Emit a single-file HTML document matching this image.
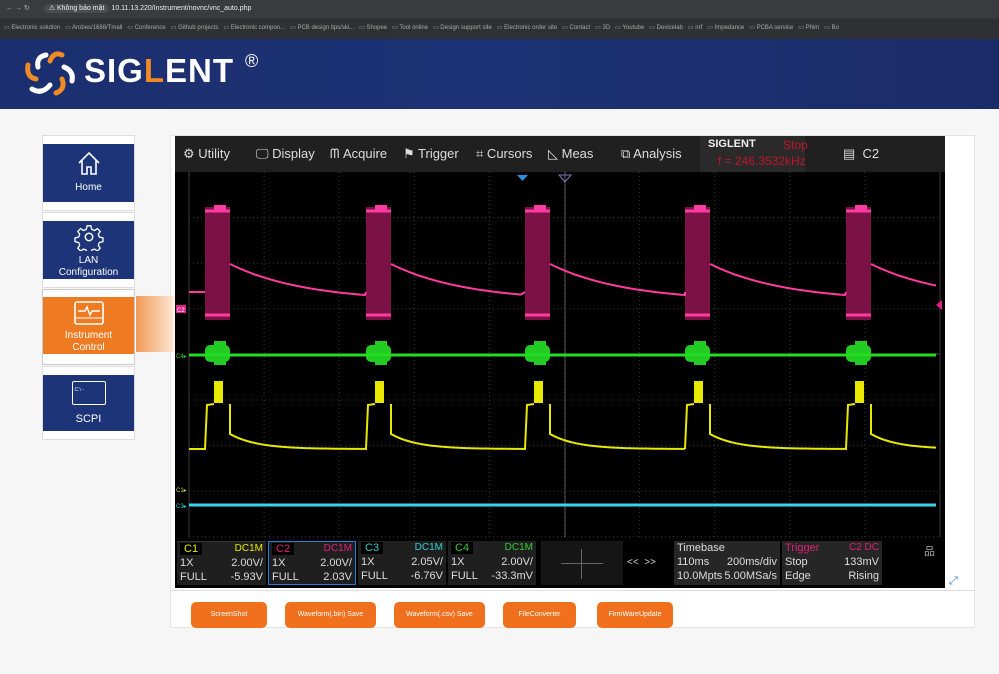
<!DOCTYPE html>
<html><head><meta charset="utf-8"><style>
*{margin:0;padding:0;box-sizing:border-box}
body{width:999px;height:674px;overflow:hidden;background:#f4f4f4;font-family:"Liberation Sans",sans-serif;position:relative}
.abs{position:absolute}
#top{left:0;top:0;width:999px;height:18px;background:#3a3b3e;color:#ddd;font-size:7px;line-height:18px}
#bm{left:0;top:18px;width:999px;height:21px;background:#2f3033;color:#aaa;font-size:6px;line-height:21px;white-space:nowrap;overflow:hidden}
#hdr{left:0;top:39px;width:999px;height:70px;background:linear-gradient(90deg,#1b2f70,#1d3274 50%,#1a2c68)}
.nav{left:42px;width:93px;background:#fff;border:1px solid #ddd}
.tile{position:absolute;left:0;right:0;color:#fff;font-size:10px;text-align:center;line-height:12px}
.menu{left:175px;top:136px;width:770px;height:36px;background:#202020;color:#ddd;font-size:13px}
.menu span{position:absolute;top:10px}
.btn{position:absolute;top:602px;height:26px;background:#f0701d;color:#fff;font-size:7px;border-radius:5px;text-align:center;line-height:26px}
.cb{position:absolute;top:541px;height:44px;background:#1f1f1f;font-size:11px;color:#ddd}
.cb div{position:absolute;left:3px;right:3px;display:flex;justify-content:space-between}
</style></head><body>
<div id="top" class="abs"><span style="margin-left:6px;color:#bbb">←  →  ↻</span><span style="margin-left:14px;background:#4a4b4e;border-radius:8px;padding:1px 5px;color:#eee">⚠ Không bảo mật</span> <span style="color:#eee">10.11.13.220/Instrument/novnc/vnc_auto.php</span></div>
<div id="bm" class="abs"><span style="margin-left:4px">▭ Electronic solution &nbsp; ▭ Arobes/1688/Tmall &nbsp; ▭ Conference &nbsp; ▭ Github projects &nbsp; ▭ Electronic compon... &nbsp; ▭ PCB design tips/ski... &nbsp; ▭ Shopee &nbsp; ▭ Tool online &nbsp; ▭ Design support site &nbsp; ▭ Electronic order site &nbsp; ▭ Contact &nbsp; ▭ 3D &nbsp; ▭ Youtube &nbsp; ▭ Devicelab &nbsp; ▭ nrf &nbsp; ▭ Impedance &nbsp; ▭ PCBA service &nbsp; ▭ Phim &nbsp; ▭ Bo</span></div>
<div id="hdr" class="abs">
<svg class="abs" style="left:22px;top:10px" width="56" height="50" viewBox="0 0 56 50"><g fill="none" stroke-width="5" stroke-linecap="round"><path d="M24 6 Q14 8 16 18" stroke="#fff"/><path d="M6 16 Q4 28 14 30" stroke="#f08a24"/><path d="M10 40 Q20 46 28 36" stroke="#fff"/><path d="M34 44 Q44 40 40 30" stroke="#f08a24"/><path d="M50 32 Q52 22 42 18" stroke="#fff"/><path d="M40 6 Q32 2 28 12" stroke="#f08a24"/></g></svg>
<div class="abs" style="left:84px;top:13px;color:#fff;font-size:33px;font-weight:bold;letter-spacing:1px">SIG<span style="color:#f08a24">L</span>ENT</div>
<div class="abs" style="left:245px;top:12px;color:#fff;font-size:18px">®</div>
</div>
<div class="abs" style="left:0;top:109px;width:999px;height:565px;background:#f6f6f6"></div>
<div class="abs" style="left:170px;top:135px;width:805px;height:493px;background:#fff;border:1px solid #e4e4e4"></div>
<!-- nav -->
<div class="abs nav" style="top:135px;height:76px"><div class="tile" style="top:8px;height:58px;background:#1d3478"><svg width="30" height="30" viewBox="0 0 30 30" style="margin-top:4px"><path d="M5 15 L15 5 L25 15 M8 12 V26 H13 V19 H17 V26 H22 V12" fill="none" stroke="#fff" stroke-width="1.6"/></svg><br>Home</div></div>
<div class="abs nav" style="top:212px;height:76px"><div class="tile" style="top:8px;height:58px;background:#1d3478"><svg width="30" height="28" viewBox="0 0 30 30" style="margin-top:2px"><circle cx="15" cy="15" r="4" fill="none" stroke="#fff" stroke-width="1.6"/><path d="M13 3h4l1 4 3 1 3-2 3 3-2 3 1 3 4 1v4l-4 1-1 3 2 3-3 3-3-2-3 1-1 4h-4l-1-4-3-1-3 2-3-3 2-3-1-3-4-1v-4l4-1 1-3-2-3 3-3 3 2 3-1z" fill="none" stroke="#fff" stroke-width="1.4"/></svg><br>LAN<br>Configuration</div></div>
<div class="abs" style="left:136px;top:296px;width:40px;height:56px;background:linear-gradient(90deg,#f19a55,#fbe3cf 90%,#fff0)"></div>
<div class="abs nav" style="top:289px;height:76px;border-color:#ccc"><div class="tile" style="top:7px;height:57px;background:#ee7a22"><svg width="32" height="26" viewBox="0 0 32 26" style="margin-top:3px"><rect x="2" y="2" width="28" height="22" rx="2" fill="none" stroke="#fff" stroke-width="1.6"/><path d="M5 11h7l2-4 3 8 2-4h8" fill="none" stroke="#fff" stroke-width="1.4"/><path d="M2 18h28" stroke="#fff"/></svg><br>Instrument<br>Control</div></div>
<div class="abs nav" style="top:366px;height:74px"><div class="tile" style="top:8px;height:56px;background:#1d3478"><div style="margin:6px auto 0;width:34px;height:24px;border:1.5px solid #fff;border-radius:2px;font-size:5px;text-align:left;padding:2px">C:\ -</div><div style="margin-top:8px;font-size:11px">SCPI</div></div></div>
<!-- scope -->
<div class="abs" style="left:175px;top:136px;width:770px;height:452px;background:#000"></div>
<div class="abs menu"><span style="left:8px">⚙ Utility</span><span style="left:81px">🖵 Display</span><span style="left:155px">ᗰ Acquire</span><span style="left:228px">⚑ Trigger</span><span style="left:301px">⌗ Cursors</span><span style="left:373px">◺ Meas</span><span style="left:446px">⧉ Analysis</span>
<div class="abs" style="left:525px;top:0;width:105px;height:36px;background:#2a2a2a"></div>
<span style="left:533px;top:2px;font-size:11px;font-weight:bold;color:#eee">SIGLENT</span><span style="left:608px;top:2px;font-size:12px;color:#c0142a">Stop</span><span style="left:543px;top:18px;font-size:12px;color:#c0142a">f = 246.3532kHz</span><span style="left:668px">▤ &nbsp;C2</span></div>
<svg class="abs" style="left:175px;top:172px" width="770" height="368" viewBox="175 172 770 368" id="plot">
<g stroke="#3a3a3a" stroke-width="1" id="grid"></g>
<path d="M517 175 h11 l-5.5 6z" fill="#2a8fe0"/><path d="M559 175 h12 l-6 7z" fill="none" stroke="#7b7bbb"/>
<g id="w"></g>
<rect x="176" y="305" width="10" height="8" fill="#e0208a"/><text x="177" y="312" font-size="6" fill="#fff">C2</text>
<text x="176" y="358" font-size="6" fill="#3c3">C4▸</text><text x="176" y="492" font-size="6" fill="#cc3">C1▸</text><text x="176" y="508" font-size="6" fill="#3cc">C3▸</text>
<path d="M942 300 l-6 5 6 5z" fill="#e0208a"/>
</svg>
<!-- bottom -->
<div class="cb" style="left:177px;width:89px;border-top:1px solid #333"><div style="top:1px"><span style="background:#000;color:#e8e800;padding:0 4px">C1</span><span style="color:#e8e800;font-size:10px">DC1M</span></div><div style="top:15px"><span>1X</span><span>2.00V/</span></div><div style="top:29px"><span>FULL</span><span>-5.93V</span></div></div>
<div class="cb" style="left:268px;width:88px;border:1.5px solid #2a7ad8"><div style="top:1px"><span style="color:#e0207a;background:#000;padding:0 4px">C2</span><span style="color:#e0207a;font-size:10px">DC1M</span></div><div style="top:15px"><span>1X</span><span>2.00V/</span></div><div style="top:29px"><span>FULL</span><span>2.03V</span></div></div>
<div class="cb" style="left:358px;width:88px"><div style="top:1px"><span style="color:#3cc;background:#000;padding:0 4px">C3</span><span style="color:#3cc;font-size:10px">DC1M</span></div><div style="top:15px"><span>1X</span><span>2.05V/</span></div><div style="top:29px"><span>FULL</span><span>-6.76V</span></div></div>
<div class="cb" style="left:448px;width:88px"><div style="top:1px"><span style="color:#3c3;background:#000;padding:0 4px">C4</span><span style="color:#3c3;font-size:10px">DC1M</span></div><div style="top:15px"><span>1X</span><span>2.00V/</span></div><div style="top:29px"><span>FULL</span><span>-33.3mV</span></div></div>
<div class="cb" style="left:541px;width:82px;background:#151515"><div style="top:22px;left:20px;right:20px;height:1px;background:#666"></div><div style="top:8px;left:40px;width:1px;height:30px;background:#666;right:auto"></div></div>
<div class="abs" style="left:627px;top:557px;color:#ccc;font-size:10px">&lt;&lt; &nbsp;&gt;&gt;</div>
<div class="cb" style="left:674px;width:106px;background:#262626"><div style="top:1px"><span>Timebase</span></div><div style="top:15px"><span>110ms</span><span>200ms/div</span></div><div style="top:29px"><span>10.0Mpts</span><span>5.00MSa/s</span></div></div>
<div class="cb" style="left:782px;width:100px;background:#262626"><div style="top:1px"><span style="color:#e0207a">Trigger</span><span style="color:#e0207a;font-size:10px">C2 DC</span></div><div style="top:15px"><span>Stop</span><span>133mV</span></div><div style="top:29px"><span>Edge</span><span>Rising</span></div></div>
<div class="abs" style="left:924px;top:543px;color:#aaa;font-size:11px">品</div>
<div class="abs" style="left:949px;top:575px;color:#3a7ad8;font-size:11px">⤢</div>
<div class="abs" style="left:170px;top:590px;width:805px;height:1px;background:#ddd"></div>
<div class="btn" style="left:191px;width:76px">ScreenShot</div>
<div class="btn" style="left:285px;width:91px">Waveform(.bin) Save</div>
<div class="btn" style="left:394px;width:91px">Waveform(.csv) Save</div>
<div class="btn" style="left:503px;width:73px">FileConverter</div>
<div class="btn" style="left:597px;width:76px">FirmWareUpdate</div>
<script>
var ns="http://www.w3.org/2000/svg",g=document.getElementById('grid'),w=document.getElementById('w');
function el(t,a,p){var e=document.createElementNS(ns,t);for(var k in a)e.setAttribute(k,a[k]);(p||w).appendChild(e);return e}
for(var i=0;i<=10;i++){var x=189+i*75.1;el('line',{x1:x,y1:172,x2:x,y2:537,'stroke-dasharray':i==0||i==10?'':'1 3'},g)}
for(var j=0;j<=8;j++){var y=172+j*45.6;el('line',{x1:189,y1:y,x2:940,y2:y,'stroke-dasharray':'1 3'},g)}
el('line',{x1:565,y1:172,x2:565,y2:537,stroke:'#555'},g);el('line',{x1:189,y1:354,x2:940,y2:354,stroke:'#444'},g);
var B=[205,366,525,685,846],pk="M189 292",yl="M189 449";
B.forEach(function(b,i){var e=b+25,n=i<4?B[i+1]:936;
 el('rect',{x:b,y:207,width:25,height:113,fill:'#7a1245'});
 el('path',{d:'M'+b+' 211h25M'+b+' 315h25',stroke:'#ff3aa0','stroke-width':3});
 el('rect',{x:b+9,y:205,width:12,height:6,fill:'#ff3aa0'});
 el('rect',{x:b,y:345,width:25,height:17,fill:'#22cc22',rx:5});el('rect',{x:b+9,y:341,width:12,height:24,fill:'#22cc22'});
 el('rect',{x:b+9,y:381,width:9,height:22,fill:'#e8e800'});
 pk+=" L"+b+" 292 M"+e+" 264";yl+=" L"+b+" 449 L"+(b+2)+" 405 L"+(b+9)+" 404 M"+e+" 404 L"+e+" 434";
 for(var x=e;x<=n;x+=5){var t=(x-e)/135;pk+=" L"+x+" "+(264+31*(1-Math.exp(-t*1.8))/(1-Math.exp(-1.8)));yl+=" L"+x+" "+(449-15*Math.exp(-t*5))}
});
el('path',{d:pk,fill:'none',stroke:'#ff3aa0','stroke-width':2});
el('path',{d:yl,fill:'none',stroke:'#e8e800','stroke-width':2});
el('line',{x1:189,y1:355,x2:936,y2:355,stroke:'#22dd22','stroke-width':3});
el('line',{x1:189,y1:505,x2:936,y2:505,stroke:'#33d8e8','stroke-width':3});
</script>
</body></html>
